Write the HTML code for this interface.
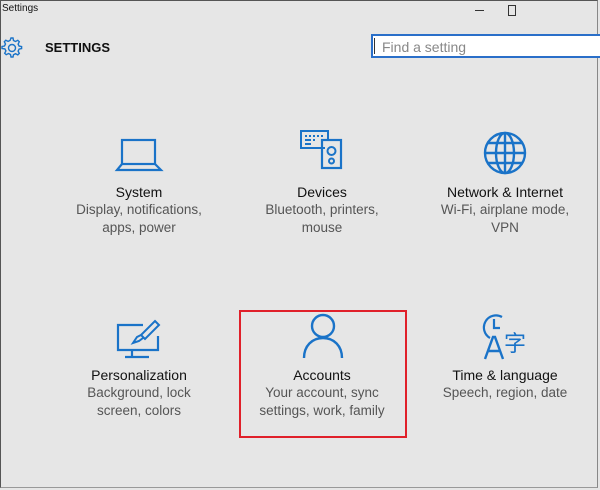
<!DOCTYPE html>
<html><head><style>
body{margin:0;width:600px;height:490px;background:#e6e6e6;font-family:"Liberation Sans",sans-serif;position:relative;overflow:hidden}
.frame{position:absolute;left:0;top:0;width:596px;height:486px;border:1px solid #555;border-bottom:1px solid #999;border-right:1px solid #888}
.t{position:absolute;text-align:center;width:180px;font-size:13.5px;line-height:18px}
.t b{font-weight:normal;color:#111;display:block;font-size:14px}
.t span{color:#555}
svg{position:absolute}
</style></head><body>
<div class="frame"></div>
<div style="position:absolute;left:2px;top:3px;font-size:10px;color:#111">Settings</div>
<div style="position:absolute;left:475px;top:10px;width:9px;height:1px;background:#333"></div>
<div style="position:absolute;left:508px;top:5px;width:6px;height:9px;border:1px solid #333"></div>
<svg style="left:1px;top:37px" width="22" height="22" viewBox="0 0 22 22"><path d="M11 2l2 0 .5 2.5 2 1 2.3-1.2 1.5 1.5-1.2 2.3 1 2 2.5.5v2l-2.5.5-1 2 1.2 2.3-1.5 1.5-2.3-1.2-2 1L13 21h-2l-.5-2.5-2-1-2.3 1.2-1.5-1.5 1.2-2.3-1-2L2 12.5v-2l2.5-.5 1-2L4.3 5.7l1.5-1.5 2.3 1.2 2-1z" fill="none" stroke="#1a73c8" stroke-width="1.4" transform="translate(-1,-1)"/><circle cx="11" cy="11" r="3.5" fill="none" stroke="#1a73c8" stroke-width="1.4"/></svg>
<div style="position:absolute;left:45px;top:40px;font-size:13px;font-weight:bold;color:#111">SETTINGS</div>
<div style="position:absolute;left:371px;top:34px;width:240px;height:24px;border:2px solid #2a6fc9;background:#fff;box-sizing:border-box"></div>
<div style="position:absolute;left:374px;top:38px;width:1px;height:16px;background:#333"></div>
<div style="position:absolute;left:382px;top:39px;font-size:14px;color:#888">Find a setting</div>

<svg style="left:114px;top:135px" width="50" height="40" viewBox="0 0 50 40"><rect x="8" y="5" width="33" height="24" fill="none" stroke="#1a73c8" stroke-width="2.2"/><path d="M8 29L3 35H47L41 29" fill="none" stroke="#1a73c8" stroke-width="2.2"/></svg>
<div class="t" style="left:49px;top:183px"><b>System</b><span>Display, notifications,<br>apps, power</span></div>

<svg style="left:298px;top:128px" width="50" height="50" viewBox="0 0 50 50"><path d="M27 20H3V3h27v8" fill="none" stroke="#1a73c8" stroke-width="2"/><path d="M7 8h2M11 8h2M15 8h2M19 8h2M23 8h2M7 12h6M15 12h2M7 16h6" stroke="#1a73c8" stroke-width="2"/><rect x="24" y="12" width="19" height="28" fill="none" stroke="#1a73c8" stroke-width="2.2"/><circle cx="33.5" cy="23" r="4" fill="none" stroke="#1a73c8" stroke-width="2"/><circle cx="33.5" cy="33" r="2.5" fill="none" stroke="#1a73c8" stroke-width="2"/></svg>
<div class="t" style="left:232px;top:183px"><b>Devices</b><span>Bluetooth, printers,<br>mouse</span></div>

<svg style="left:482px;top:130px" width="46" height="46" viewBox="0 0 46 46"><circle cx="23" cy="23" r="20" fill="none" stroke="#1a73c8" stroke-width="2.4"/><ellipse cx="23" cy="23" rx="9" ry="20" fill="none" stroke="#1a73c8" stroke-width="2.4"/><path d="M3 23h40M6 13h34M6 33h34M23 3v40" stroke="#1a73c8" stroke-width="2.4"/></svg>
<div class="t" style="left:415px;top:183px"><b>Network &amp; Internet</b><span>Wi-Fi, airplane mode,<br>VPN</span></div>

<svg style="left:115px;top:318px" width="50" height="44" viewBox="0 0 50 44"><path d="M28 7H3v25h40V18" fill="none" stroke="#1a73c8" stroke-width="2.2"/><path d="M17 32v7M10 39h24" stroke="#1a73c8" stroke-width="2.2"/><path d="M40 3l4 4-14 14-4-4zM26 17l-4 2-4 6 6-2 4-3" fill="none" stroke="#1a73c8" stroke-width="2"/></svg>
<div class="t" style="left:49px;top:366px"><b>Personalization</b><span>Background, lock<br>screen, colors</span></div>

<div style="position:absolute;left:239px;top:310px;width:164px;height:124px;border:2px solid #e0202a"></div>
<svg style="left:300px;top:312px" width="46" height="48" viewBox="0 0 46 48"><circle cx="23" cy="14" r="11" fill="none" stroke="#1a73c8" stroke-width="2.4"/><path d="M4 46C4 34 12 26 23 26S42 34 42 46" fill="none" stroke="#1a73c8" stroke-width="2.4"/></svg>
<div class="t" style="left:232px;top:366px"><b>Accounts</b><span>Your account, sync<br>settings, work, family</span></div>

<svg style="left:482px;top:313px" width="50" height="48" viewBox="0 0 50 48"><path d="M20 4A11 11 0 1 0 8 25" fill="none" stroke="#1a73c8" stroke-width="2.2"/><path d="M12 6v9h6" fill="none" stroke="#1a73c8" stroke-width="2.2"/><path d="M3 46L11 24h2l8 22M6 38h12" fill="none" stroke="#1a73c8" stroke-width="2.4"/><text x="22" y="38" font-family="Noto Sans CJK SC,sans-serif" font-size="22" fill="#1a73c8">字</text></svg>
<div class="t" style="left:415px;top:366px"><b>Time &amp; language</b><span>Speech, region, date</span></div>
</body></html>
